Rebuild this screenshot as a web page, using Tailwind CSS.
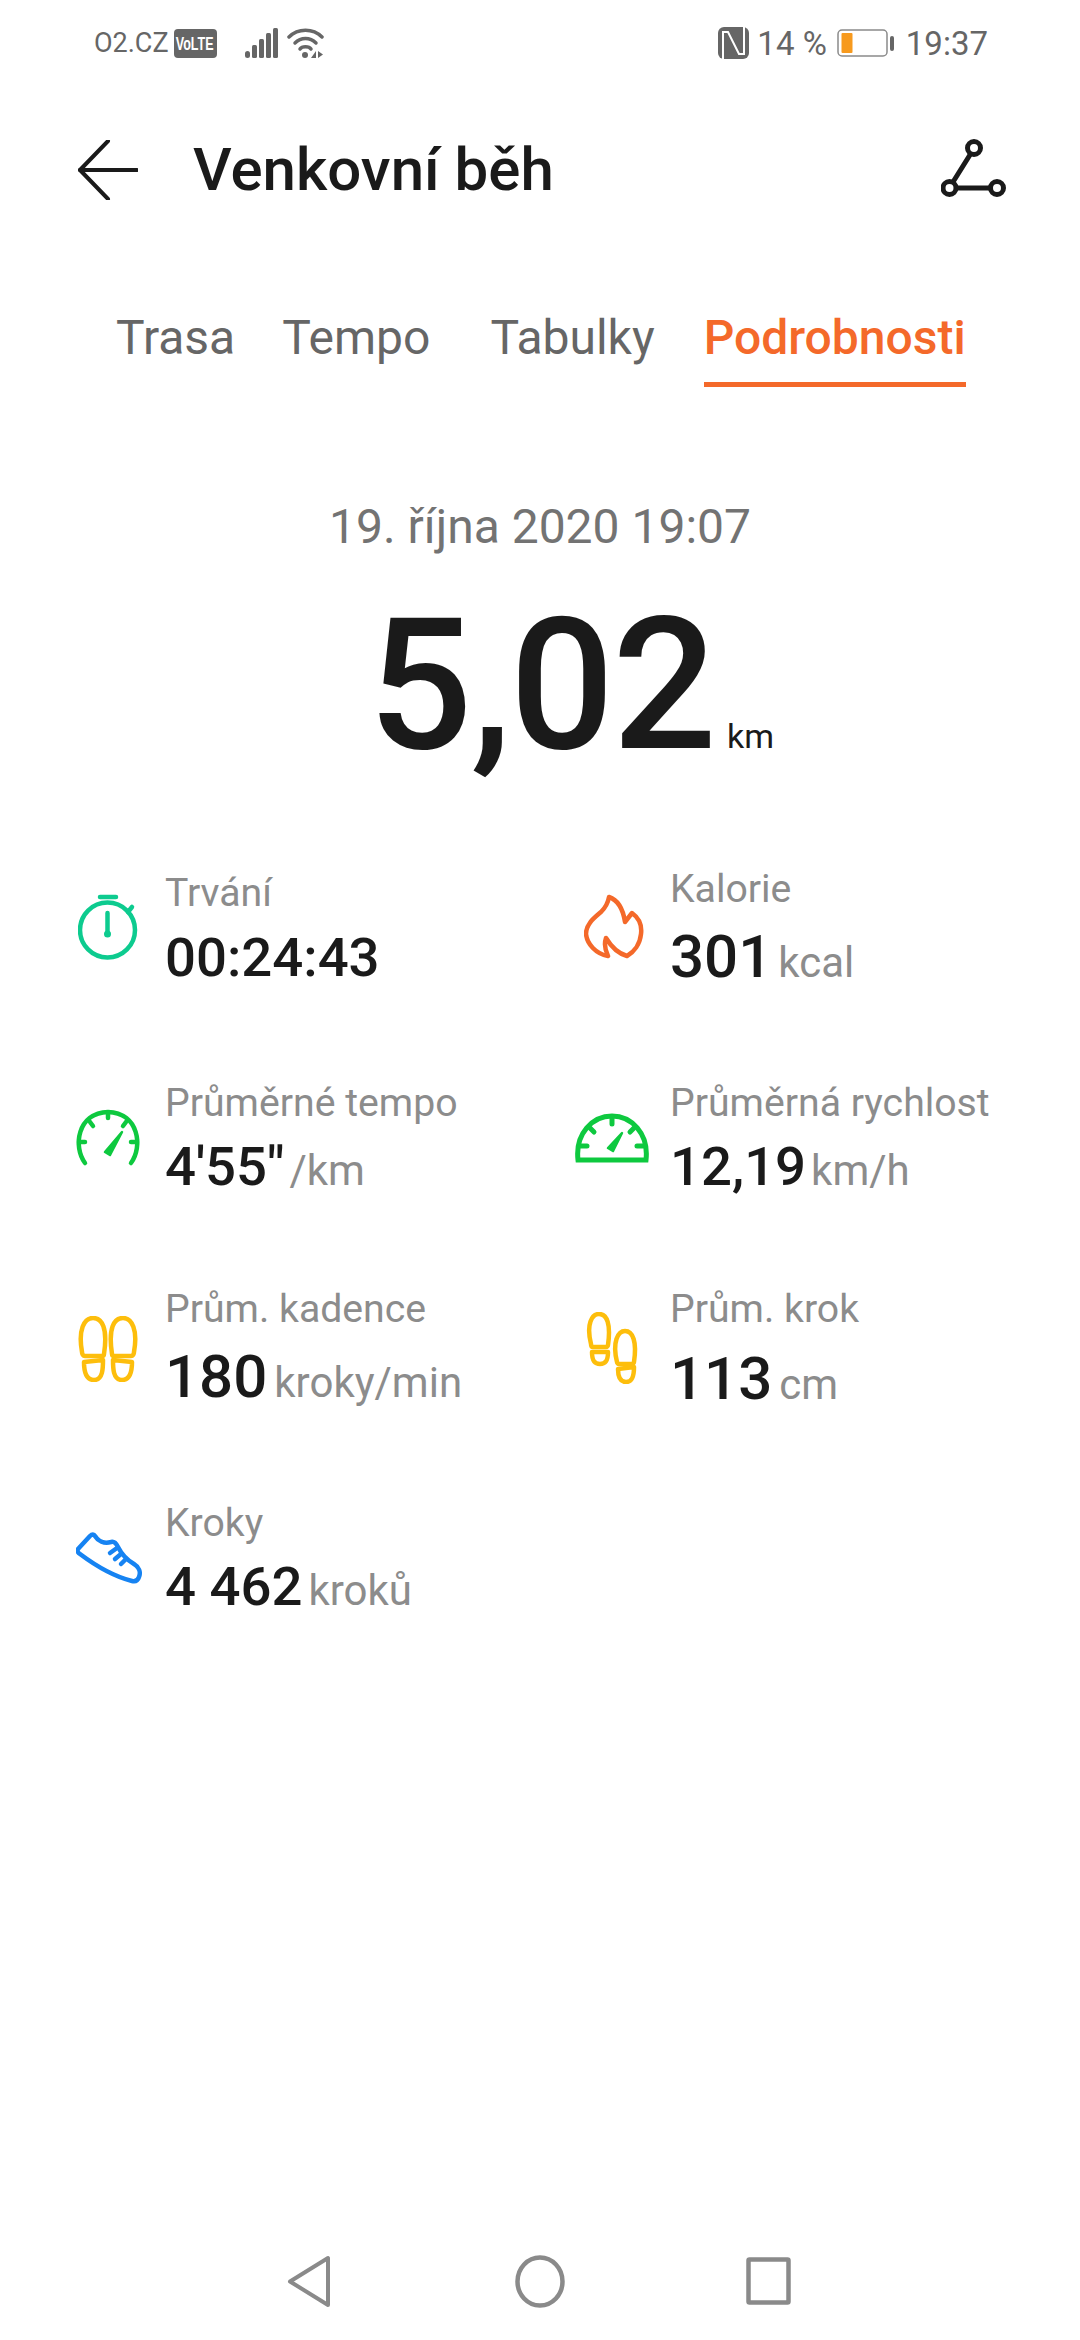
<!DOCTYPE html>
<html lang="cs">
  <head>
    <meta charset="UTF-8" />
    <meta name="viewport" content="width=device-width, initial-scale=1.0" />
    <title>Venkovní běh</title>
    <script src="https://cdn.jsdelivr.net/npm/@tailwindcss/browser@4"></script>
  </head>
  <body class="bg-white w-[1080px] h-[2340px] overflow-hidden flex flex-col font-['Roboto',sans-serif] text-[#1a1a1a]">
    <!-- status bar -->
    <div class="h-[86px] pl-[94px] pr-[92px] flex items-center justify-between text-[#666666]">
      <div class="flex items-center">
        <span class="text-[27px] leading-none">O2.CZ</span>
        <span class="ml-[5px] w-[43px] h-[29px] bg-[#666666] rounded-[4px] flex items-center justify-center overflow-hidden">
          <span class="text-white text-[19px] font-bold leading-none scale-x-[0.66] font-['Liberation_Sans',sans-serif]">VoLTE</span>
        </span>
        <svg class="ml-[28px]" width="33" height="30" viewBox="0 0 33 30" fill="#666666">
          <rect x="0" y="23" width="5" height="7" rx="2.500" />
          <rect x="7" y="17" width="5" height="13" rx="1.500" />
          <rect x="14" y="11" width="5" height="19" rx="1.500" />
          <rect x="21" y="5" width="5" height="25" rx="1.500" />
          <rect x="28" y="0" width="5" height="30" rx="1.500" />
        </svg>
        <svg class="ml-[9px]" width="37" height="31" viewBox="0 0 37 31" fill="none" stroke="#666666" stroke-width="3.500" stroke-linecap="round">
          <path d="M2 9C11 0 26 0 35 9" />
          <path d="M8 15C14 9 23 9 29 15" />
          <path d="M13 21C15 18 22 18 24 21" />
          <circle cx="18" cy="27" r="3" fill="#666666" stroke="none" />
          <path d="M29 23v7h-5zM31 23v7l5-3.500z" fill="#666666" stroke="none" />
        </svg>
      </div>
      <div class="flex items-center">
        <svg width="31" height="32" viewBox="0 0 31 32" fill="none">
          <rect width="31" height="32" rx="6" fill="#666666" />
          <path d="M5 32V5h5l11 22h5V0" stroke="white" stroke-width="2" />
        </svg>
        <span class="ml-[8px] text-[33px] leading-none">14 %</span>
        <svg class="ml-[10px]" width="58" height="30" viewBox="0 0 58 30">
          <rect x="1" y="2" width="49" height="26" rx="4" fill="white" stroke="#8a8a8a" stroke-width="1.500" />
          <rect x="4.500" y="5" width="11" height="20" rx="1" fill="#f79a1e" />
          <rect x="53" y="8" width="4" height="15" rx="2" fill="#666666" />
        </svg>
        <span class="ml-[11px] text-[33px] leading-none">19:37</span>
      </div>
    </div>

    <!-- header -->
    <div class="h-[168px] pl-[78px] pr-[73px] flex items-center justify-between">
      <div class="flex items-center">
        <svg width="60" height="60" viewBox="0 0 60 60" fill="none" stroke="#1a1a1a" stroke-width="4" stroke-linecap="round" stroke-linejoin="round">
          <path d="M30 1L2 30L30 59" />
          <path d="M2 30H59" />
        </svg>
        <h1 class="ml-[55px] text-[60px] leading-none font-medium">Venkovní běh</h1>
      </div>
      <svg class="-mt-[4px]" width="66" height="60" viewBox="0 0 66 60" fill="none" stroke="#1a1a1a" stroke-width="5">
        <circle cx="33" cy="10" r="6.500" />
        <circle cx="8.500" cy="50" r="6.500" />
        <circle cx="56" cy="50" r="6.500" />
        <path d="M29.500 16L12 44M15 50H49.500" />
      </svg>
    </div>

    <!-- tabs -->
    <div class="h-[170px] text-[48px] leading-[48px] text-[#666666] flex pl-[116px] pt-[60px]">
      <span>Trasa</span>
      <span class="ml-[47px]">Tempo</span>
      <span class="ml-[60px]">Tabulky</span>
      <span class="ml-[49px] h-[73px] text-[#f4692a] font-medium border-b-[5px] border-[#f4692a]">Podrobnosti</span>
    </div>

    <!-- summary -->
    <div class="mt-[79px] text-center text-[48px] leading-[48px] text-[#737373]">19. října 2020 19:07</div>
    <div class="mt-[34px] flex justify-center items-baseline pl-[62px]">
      <span class="text-[184px] leading-[200px] font-medium tracking-[-2px]">5,02</span>
      <span class="ml-[12px] text-[34px] leading-none">km</span>
    </div>

    <!-- stats -->
    <div class="mt-[85px] pl-[78px] grid grid-cols-[498px_1fr] grid-rows-[210px_206px_214px_auto]">
      <div class="flex">
        <div class="w-[88px] pt-[24px]">
          <svg width="60" height="66" viewBox="0 0 60 66" fill="none" stroke="#0dcb8f" stroke-width="4.500" stroke-linecap="round">
            <circle cx="29.500" cy="36" r="27.500" />
            <path d="M22 3H38M50 18L54 13M29.500 19V40" />
            <circle cx="29.500" cy="40" r="3.500" fill="#0dcb8f" stroke="none" />
          </svg>
        </div>
        <div class="-ml-[1px]">
          <div class="text-[39.200px] leading-[46px] text-[#8c8c8c]">Trvání</div>
          <div class="mt-[12px] text-[54.500px] leading-[58px] font-medium">00:24:43</div>
        </div>
      </div>
      <div class="flex">
        <div class="w-[94px] pl-[8px] pt-[24px]">
          <svg width="62" height="66" viewBox="0 0 62 66" fill="none" stroke="#f4692a" stroke-width="4.500" stroke-linecap="round" stroke-linejoin="round">
            <path d="M25 3C34 6 39 15 41 28L48 19C55 24 58 32 57 40C56 50 50 58 43 62C36 60 28 54 22 44C20 50 21 56 24 62C12 60 3 50 2 40C2 30 10 24 17 18C21 14 24 9 25 3Z" />
          </svg>
        </div>
        <div class="-mt-[4px]">
          <div class="text-[39.200px] leading-[46px] text-[#8c8c8c]">Kalorie</div>
          <div class="mt-[16px] flex items-baseline leading-[58px]">
            <span class="text-[60px] font-medium">301</span>
            <span class="ml-[6px] text-[42px] text-[#8c8c8c]">kcal</span>
          </div>
        </div>
      </div>

      <div class="flex">
        <div class="w-[88px] pt-[29px] -ml-[3px] mr-[3px]">
          <svg width="66" height="58" viewBox="0 0 66 58" fill="none" stroke="#0ec93f" stroke-width="4.500" stroke-linecap="round">
            <path d="M10 54C-2 38 2 4 33 3C64 4 68 38 56 54" />
            <path d="M33 4V9M15 13L18 17M51 13L48 17M4 33H10M62 33H56" />
            <path d="M30 43L35 46L47 23Z" fill="#0ec93f" stroke-width="2.500" stroke-linejoin="round" />
          </svg>
        </div>
        <div class="-ml-[1px]">
          <div class="text-[39.200px] leading-[46px] text-[#8c8c8c]">Průměrné tempo</div>
          <div class="mt-[11px] flex items-baseline leading-[58px]">
            <span class="text-[54.500px] font-medium">4'55"</span>
            <span class="ml-[5px] text-[42px] text-[#8c8c8c]">/km</span>
          </div>
        </div>
      </div>
      <div class="flex">
        <div class="w-[95px] -ml-[1px] pt-[33px]">
          <svg width="74" height="52" viewBox="0 0 74 52" fill="none" stroke="#0ec93f" stroke-width="5" stroke-linecap="round">
            <path d="M3 47C0 20 18 3 37 3C56 3 74 20 71 47H3Z" />
            <path d="M37 4V11M14 14L19 19M60 14L55 19M5 33H12M69 33H62" />
            <path d="M33 35L38 38L47 20Z" fill="#0ec93f" stroke-width="2.500" stroke-linejoin="round" />
          </svg>
        </div>
        <div>
          <div class="text-[39.200px] leading-[46px] text-[#8c8c8c]">Průměrná rychlost</div>
          <div class="mt-[11px] flex items-baseline leading-[58px]">
            <span class="text-[54.500px] font-medium">12,19</span>
            <span class="ml-[5px] text-[42px] text-[#8c8c8c]">km/h</span>
          </div>
        </div>
      </div>

      <div class="flex">
        <div class="w-[88px] pt-[30px]">
          <svg width="60" height="66" viewBox="0 0 60 66" fill="none" stroke="#fdbe0c" stroke-width="4.500" stroke-linejoin="round">
            <path d="M4 36C0 14 6 2 15 2C24 2 30 12 26 38C26 40 25 40 24 40H7C5 40 4 38 4 36Z" />
            <path d="M6 46L25 44C25 52 25 64 16 64C8 64 6 56 6 46Z" />
            <path d="M56 36C60 14 54 2 45 2C36 2 30 12 34 38C34 40 35 40 36 40H53C55 40 56 38 56 36Z" />
            <path d="M54 46L35 44C35 52 35 64 44 64C52 64 54 56 54 46Z" />
          </svg>
        </div>
        <div class="-ml-[1px]">
          <div class="text-[39.200px] leading-[46px] text-[#8c8c8c]">Prům. kadence</div>
          <div class="mt-[16px] flex items-baseline leading-[58px]">
            <span class="text-[60px] font-medium">180</span>
            <span class="ml-[7px] text-[42px] text-[#8c8c8c]">kroky/min</span>
          </div>
        </div>
      </div>
      <div class="flex">
        <div class="w-[94px] pl-[10px] pt-[26px]">
          <svg width="54" height="72" viewBox="0 0 54 72" fill="none" stroke="#fdbe0c" stroke-width="4.500" stroke-linejoin="round">
            <path d="M5 32C0 12 6 2 13 2C21 2 25 12 22 33C22 34 21 35 20 35H7C6 35 5 34 5 32Z" />
            <path d="M6 40H22C22 48 20 52 14 52C8 52 6 48 6 40Z" />
            <path d="M31 50C26 30 32 19 39 19C47 19 51 30 48 50C48 51 47 52 46 52H33C32 52 31 51 31 50Z" />
            <path d="M32 57L48 55C48 65 46 70 40 70C34 70 32 65 32 57Z" />
          </svg>
        </div>
        <div>
          <div class="text-[39.200px] leading-[46px] text-[#8c8c8c]">Prům. krok</div>
          <div class="mt-[18px] flex items-baseline leading-[58px]">
            <span class="text-[60px] font-medium">113</span>
            <span class="ml-[7px] text-[42px] text-[#8c8c8c]">cm</span>
          </div>
        </div>
      </div>

      <div class="flex">
        <div class="w-[88px] -ml-[2px] mr-[2px] pt-[32px]">
          <svg width="66" height="52" viewBox="0 0 66 52" fill="none" stroke="#1683f2" stroke-width="4.500" stroke-linecap="round" stroke-linejoin="round">
            <path d="M2 17L14 4C16 2 18 2 19 4C22 9 28 12 35 10C38 9 40 11 42 15C46 23 51 28 58 32C63 35 65 40 63 45C62 48 60 50 56 49C36 44 20 34 4 22C2 21 1 19 2 17Z" />
            <path d="M34 21L41 16M39 27L45 22M45 32L50 27" />
          </svg>
        </div>
        <div class="-ml-[1px]">
          <div class="text-[39.200px] leading-[46px] text-[#8c8c8c]">Kroky</div>
          <div class="mt-[11px] flex items-baseline leading-[58px]">
            <span class="text-[54.500px] font-medium">4 462</span>
            <span class="ml-[6px] text-[42px] text-[#8c8c8c]">kroků</span>
          </div>
        </div>
      </div>
    </div>

    <!-- nav bar -->
    <div class="mt-auto mb-[19px] h-[80px] flex items-center pl-[287px]">
      <svg width="43" height="53" viewBox="0 0 43 53" fill="none" stroke="#8a8a8a" stroke-width="4" stroke-linejoin="round">
        <path d="M3 26.500L41 3V50Z" />
      </svg>
      <svg class="ml-[185px]" width="50" height="53" viewBox="0 0 50 53" fill="none" stroke="#8a8a8a" stroke-width="4.500">
        <ellipse cx="25" cy="26.500" rx="22.500" ry="24" />
      </svg>
      <svg class="ml-[181px]" width="45" height="48" viewBox="0 0 45 48" fill="none" stroke="#8a8a8a" stroke-width="4.500" stroke-linejoin="round">
        <rect x="2.500" y="2.500" width="40" height="43" rx="1" />
      </svg>
    </div>
  </body>
</html>
